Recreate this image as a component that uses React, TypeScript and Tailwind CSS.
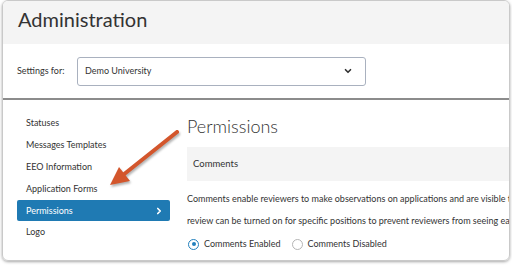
import { ChevronDown, ChevronRight } from "lucide-react";

const NAV = ["Statuses", "Messages Templates", "EEO Information", "Application Forms", "Permissions", "Logo"];

function Radio({ checked, label }: { checked?: boolean; label: string }) {
  return (
    <label className="flex items-center gap-[5px]">
      <span
        className={`grid h-[11px] w-[11px] place-items-center rounded-full border-[1.5px] ${
          checked ? "border-[#2280bd]" : "border-[#b5b5b5]"
        }`}
      >
        {checked ? <span className="h-[4px] w-[4px] rounded-full bg-[#2280bd]" /> : null}
      </span>
      <span>{label}</span>
    </label>
  );
}

export default function App() {
  return (
    <div className="relative h-[265px] w-[512px] overflow-hidden bg-white font-['Lato',sans-serif] text-[#333]">
      <div className="ml-[2px] flex h-[261px] w-[508px] flex-col overflow-hidden rounded-[6px] border border-[#c9c9c9] shadow-[0_1px_3px_rgba(0,0,0,0.35)]">
        <div className="h-[43px] shrink-0 bg-[#f4f4f4] pl-[15px] pt-[6px] text-[20px] leading-[24px]">Administration</div>
        <div className="flex h-[56px] shrink-0 items-center border-b-2 border-[#8c8c8c] pl-[14px] text-[9px]">
          <span className="w-[60px]">Settings for:</span>
          <div className="flex h-[29px] w-[289px] items-center justify-between rounded-[3px] border border-[#a9b1bf] pl-[7px] pr-[12px]">
            <span>Demo University</span>
            <ChevronDown size={10} strokeWidth={4} />
          </div>
        </div>
        <div className="flex min-h-0 flex-1">
          <div className="w-[170px] shrink-0 pl-[14px] pt-[12px] text-[9px]">
            {NAV.map((n) =>
              n === "Permissions" ? (
                <div
                  key={n}
                  className="flex h-[21px] w-[153px] items-center justify-between rounded-[2px] bg-[#1f7ab3] pl-[9px] pr-[6px] text-white"
                >
                  <span>{n}</span>
                  <ChevronRight size={10} strokeWidth={4} />
                </div>
              ) : (
                <div key={n} className="flex h-[22px] items-center pl-[9px]">
                  {n}
                </div>
              )
            )}
          </div>
          <div className="min-w-0 flex-1 overflow-hidden pl-[14px] pt-[15px]">
            <h1 className="text-[18px] font-light leading-[22px]">Permissions</h1>
            <div className="mt-[10px] flex h-[34px] items-center bg-[#f4f4f4] pl-[6px] text-[9.5px]">Comments</div>
            <div className="mt-[7px] whitespace-nowrap text-[9px] leading-[22px]">
              <div>Comments enable reviewers to make observations on applications and are visible to other reviewers. Blind</div>
              <div>review can be turned on for specific positions to prevent reviewers from seeing each other's comments.</div>
            </div>
            <div className="mt-[1px] flex h-[22px] items-center gap-[11px] pl-[1px] text-[9px]">
              <Radio checked label="Comments Enabled" />
              <Radio label="Comments Disabled" />
            </div>
          </div>
        </div>
      </div>
      <svg className="pointer-events-none absolute left-0 top-0 drop-shadow-[1px_2px_1px_rgba(0,0,0,0.3)]" width="512" height="265">
        <line x1="177" y1="132" x2="123" y2="175" stroke="#d3562c" strokeWidth="4" strokeLinecap="round" />
        <polygon points="110,185 130,181 119,167" fill="#d3562c" />
      </svg>
    </div>
  );
}
